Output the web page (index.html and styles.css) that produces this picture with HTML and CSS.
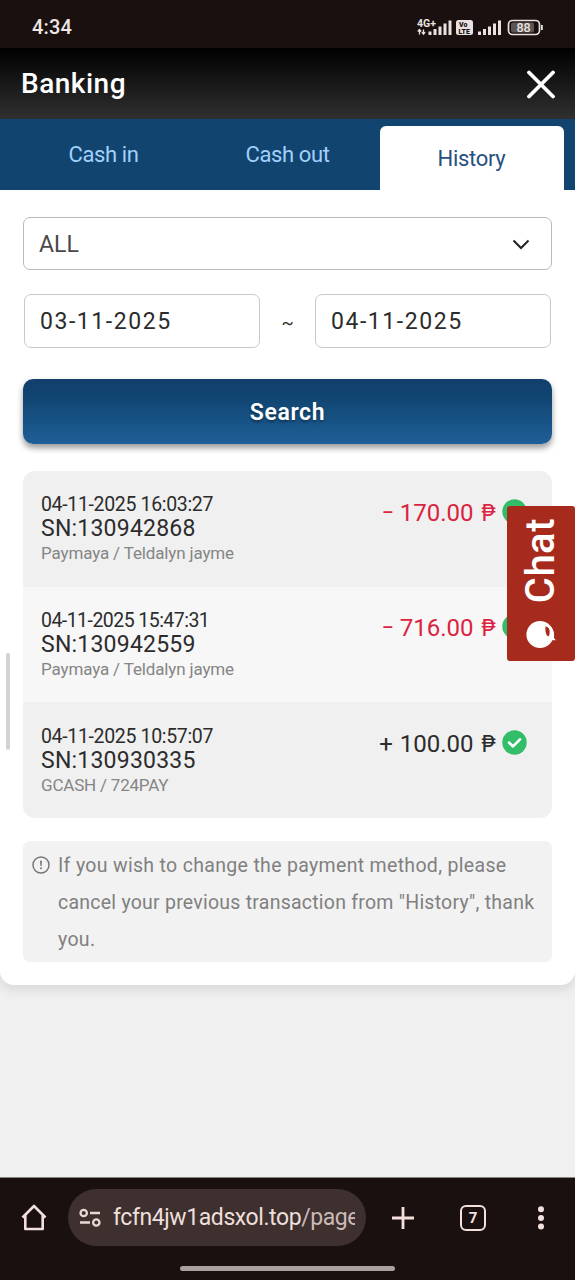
FILE: index.html
```html
<!DOCTYPE html>
<html lang="en">
<head>
<meta charset="utf-8">
<title>Banking</title>
<link rel="stylesheet" href="styles.css">
</head>
<body>
<div class="screen">
  <div class="status">
    <span class="time">4:34</span>
    <svg class="status-icons" width="128" height="20" viewBox="0 0 128 20">
      <g fill="#e9e2e0">
        <text class="net" x="0" y="9.500">4G+</text>
        <path d="M2.500 17.500v-4M.8 14.500l1.700-2 1.700 2M6.500 12.500v4M4.900 15.200l1.600 2 1.600-2" fill="none" stroke="#e9e2e0" stroke-width="1.300"/>
        <path d="M11.500 14.500h3v3.500h-3zM16.500 12h3v6h-3zM21.500 9.500h3v8.500h-3zM26.500 6.500h3V18h-3zM31.500 3.500h3V18h-3z"/>
        <rect x="39" y="3" width="17" height="15" rx="2.500"/>
        <path d="M61 14.500h3V18h-3zM66 12h3v6h-3zM71 9.500h3V18h-3zM76 6.500h3V18h-3zM81 3.500h3V18h-3z"/>
        <rect x="91.500" y="3.500" width="31" height="14" rx="4" fill="none" stroke="#e9e2e0" stroke-width="1.700"/>
        <rect x="94" y="5.500" width="23" height="10" rx="2" fill="#5d5553"/>
        <path d="M124 8h1.800v5H124z"/>
        <text class="pct" x="99.500" y="15">88</text>
      </g>
      <text class="lte" x="42" y="10">Vo</text>
      <text class="lte" x="41.500" y="16.800">LTE</text>
    </svg>
  </div>
  <header class="head">
    <h1 class="title">Banking</h1>
    <svg width="28" height="29" viewBox="0 0 28 29"><path d="M2 2.500 26 26.500M26 2.500 2 26.500" stroke="#fff" stroke-width="3.800" stroke-linecap="round"/></svg>
  </header>
  <nav class="tabs">
    <a class="tab cash-in">Cash in</a>
    <a class="tab cash-out">Cash out</a>
    <a class="tab active">History</a>
  </nav>
  <main class="page">
    <section class="card">
      <div class="select"><span>ALL</span><svg width="18" height="11" viewBox="0 0 18 11"><path d="m1.500 1.500 7.500 7.500 7.500-7.500" fill="none" stroke="#222" stroke-width="2"/></svg></div>
      <div class="dates"><div class="date">03-11-2025</div><span class="tilde">~</span><div class="date">04-11-2025</div></div>
      <button class="search">Search</button>
      <div class="list">
        <div class="row">
          <div class="info"><div class="when">04-11-2025 16:03:27</div><div class="sn">SN:130942868</div><div class="via">Paymaya / Teldalyn jayme</div></div>
          <div class="amount out"><span><span class="minus">–</span>170.00 <span class="peso">₱</span></span><svg class="ok" viewBox="0 0 25 25"><circle cx="12.500" cy="12.500" r="12.200"/><path d="m7 12.600 4 3.800 7-7"/></svg></div>
        </div>
        <div class="row">
          <div class="info"><div class="when when-b">04-11-2025 15:47:31</div><div class="sn">SN:130942559</div><div class="via">Paymaya / Teldalyn jayme</div></div>
          <div class="amount out"><span><span class="minus">–</span>716.00 <span class="peso">₱</span></span><svg class="ok" viewBox="0 0 25 25"><circle cx="12.500" cy="12.500" r="12.200"/><path d="m7 12.600 4 3.800 7-7"/></svg></div>
        </div>
        <div class="row">
          <div class="info"><div class="when">04-11-2025 10:57:07</div><div class="sn">SN:130930335</div><div class="via via-c">GCASH / 724PAY</div></div>
          <div class="amount"><span><span class="sign">+</span>100.00 <span class="peso">₱</span></span><svg class="ok" viewBox="0 0 25 25"><circle cx="12.500" cy="12.500" r="12.200"/><path d="m7 12.600 4 3.800 7-7"/></svg></div>
        </div>
      </div>
      <div class="note">
        <svg class="warn" width="18" height="18" viewBox="0 0 18 18"><circle cx="9" cy="9" r="8" fill="none" stroke="#777" stroke-width="1.500"/><path d="M8 4.700h2l-.4 5.300H8.400z" fill="#777"/><circle cx="9" cy="12.300" r="1" fill="#777"/></svg>
        <p><span class="l1">If you wish to change the payment method, please</span><br><span class="l2">cancel your previous transaction from "History", thank</span><br>you.</p>
      </div>
    </section>
  </main>
  <footer class="browser">
    <div class="bar">
      <svg class="home" width="26" height="27" viewBox="0 0 26 27"><path d="M1.500 13.500 13 2l11.500 11.500M4.300 11.500V25h17.400V11.500" fill="none" stroke="#f3e0dc" stroke-width="2.600" stroke-linejoin="round"/></svg>
      <div class="pill">
        <svg width="22" height="20" viewBox="0 0 22 20" fill="none" stroke="#e9d9d4" stroke-width="2.300"><circle cx="4.700" cy="5" r="3.200"/><circle cx="17.300" cy="14.500" r="3.200"/><path d="M11 5h10M1 14.500h10"/></svg>
        <span class="url">fcfn4jw1adsxol.top<span class="path">/page</span></span>
      </div>
      <svg class="plus" width="24" height="24" viewBox="0 0 24 24"><path d="M12 1v22M1 12h22" stroke="#f3e0dc" stroke-width="2.800"/></svg>
      <div class="count">7</div>
      <svg class="dots" width="8" height="24" viewBox="0 0 8 24" fill="#f3e0dc"><circle cx="4" cy="3.300" r="3"/><circle cx="4" cy="12" r="3"/><circle cx="4" cy="20.500" r="3"/></svg>
    </div>
    <div class="handle"></div>
  </footer>
  <div class="scroll"></div>
  <aside class="chat">
    <span class="chat-text">Chat</span>
    <svg width="30" height="29" viewBox="0 0 30 29"><circle cx="14" cy="14.500" r="13.600" fill="#fff"/><path d="M24 6c4 3.500 4.500 8 4 12l1.800 2.200L24 20z" fill="#fff"/><path d="M19.500 6.500c4 0 5.500 6 3 10-2.500-1-3.500-5-3-10z" fill="#a72b1d"/></svg>
  </aside>
</div>
</body>
</html>
```
FILE: styles.css
```css
* { box-sizing: border-box; }
body { margin: 0; font-family: Roboto, "Noto Sans", sans-serif; background: #f0f0f0; color: #2c2c2c; }
svg { display: block; flex: none; }
.screen { position: relative; width: 575px; height: 1280px; overflow: hidden; display: flex; flex-direction: column; }

.status { height: 48px; flex: none; background: #1a100f; display: flex; justify-content: space-between; align-items: center; padding: 6px 30px 0 32px; }
.time { color: #ede6e4; font-size: 20px; font-weight: 500; letter-spacing: .2px; }
.net { font: 700 10.500px Roboto, sans-serif; }
.pct { font: 500 12.500px Roboto, sans-serif; }
.lte { font: 900 7px Roboto, sans-serif; fill: #1a100f; }

.head { height: 71px; flex: none; display: flex; justify-content: space-between; align-items: center; padding: 1px 20px 0 21px; background: linear-gradient(#000, #303030); }
.title { margin: 0; font-size: 28px; font-weight: 500; line-height: 32px; letter-spacing: .5px; color: #fff; }

.tabs { height: 71px; flex: none; display: grid; grid-template-columns: 184px 184px 184px; padding: 0 11.500px; background: #114570; }
.tab { display: flex; align-items: center; justify-content: center; font-size: 22px; letter-spacing: -.4px; color: #a3d0fb; }
.active { margin-top: 7px; letter-spacing: -.3px; color: #265081; background: #fff; border-radius: 6px 6px 0 0; }

.page { flex: 1; background: #f0f0f0; }
.card { height: 795px; padding: 27px 23px 0; background: #fff; border-radius: 0 0 14px 14px; box-shadow: 0 3px 14px rgba(0,0,0,.13); clip-path: inset(0 0 -24px 0); }
.select { height: 53px; display: flex; align-items: center; justify-content: space-between; padding: 1px 21px 0 15px; border: 1px solid #b9b9b9; border-radius: 7px; font-size: 23px; color: #484848; }
.dates { display: flex; align-items: center; justify-content: space-between; padding: 0 1px; margin-top: 24px; }
.date { width: 236px; height: 54px; padding: 1px 0 0 15px; display: flex; align-items: center; border: 1.500px solid #c9c9c9; border-radius: 7px; font-size: 23px; letter-spacing: 1.550px; }
.tilde { padding-top: 3px; font-size: 18px; }
.search { display: block; width: 100%; height: 65px; margin: 31px 0 0; padding: 2px 0 0; border: 0; border-radius: 10px; background: linear-gradient(#123f6d 0%, #114571 28%, #1e5f98 100%); box-shadow: 0 4px 6px rgba(0,0,0,.4); color: #fff; font: 600 23px Roboto, sans-serif; letter-spacing: .6px; text-shadow: 0 2px 3px rgba(0,0,0,.4); }

.list { margin-top: 27px; border-radius: 12px; overflow: hidden; }
.row { height: 115.700px; padding: 22px 25px 0 18px; display: flex; justify-content: space-between; background: #f0f0f0; }
.row:nth-child(2) { background: #f7f7f7; }
.row:nth-child(3) { padding-top: 22.200px; }
.when { font-size: 19.500px; line-height: 23px; letter-spacing: -.340px; }
.when-b { letter-spacing: -.540px; }
.sn { font-size: 23px; line-height: 25px; letter-spacing: .220px; }
.via { font-size: 17px; line-height: 25.500px; letter-spacing: -.140px; color: #858585; }
.via-c { letter-spacing: -.200px; }
.amount { display: flex; align-items: center; gap: 6px; height: 39.500px; font-size: 24px; white-space: nowrap; }
.minus { display: inline-block; margin-right: 6px; transform: scaleX(.75); transform-origin: right; }
.sign { display: inline-block; margin-right: 7px; }
.peso { margin-left: 1.500px; font: 22.500px Inter, sans-serif; }
.out { color: #dc2340; }
.ok { width: 25px; height: 25px; margin-top: -3px; }
.ok circle { fill: #32bd69; }
.ok path { fill: none; stroke: #fff; stroke-width: 2.700; stroke-linecap: round; stroke-linejoin: round; }

.note { display: flex; height: 121px; margin-top: 22.900px; padding: 6px 0 0 9px; gap: 8px; border-radius: 7px; background: #f2f2f2; color: #808080; }
.warn { margin-top: 9px; }
.note p { margin: 0; font-size: 19.500px; line-height: 37px; letter-spacing: .320px; white-space: nowrap; }
.l2 { letter-spacing: .240px; }

.browser { height: 103px; flex: none; background: #1a100f; border-top: 1px solid #8d8580; }
.bar { display: flex; align-items: center; height: 57px; margin-top: 11px; padding: 0 30px 0 21px; }
.pill { width: 298px; height: 57px; margin-left: 21px; padding: 0 11px; display: flex; align-items: center; gap: 12px; border-radius: 29px; background: #3d302e; color: #eedfdb; }
.url { width: 242px; overflow: hidden; white-space: nowrap; font-size: 23px; line-height: 30px; letter-spacing: -.420px; }
.path { color: #cbbab6; }
.plus { margin-left: 25px; }
.count { width: 26px; height: 26px; margin-left: 45px; display: flex; align-items: center; justify-content: center; border: 2.500px solid #f3e0dc; border-radius: 6px; color: #f3e0dc; font-size: 15px; font-weight: 700; }
.dots { margin-left: 51px; }
.handle { width: 215px; height: 5px; margin: 20px auto 0; border-radius: 3px; background: #aaa29f; }

.scroll { position: absolute; left: 6px; top: 653px; width: 4px; height: 97px; border-radius: 2px; background: #d3d3d3; }
.chat { position: absolute; right: 0; top: 506px; width: 68px; height: 155px; padding: 12px 0 12px; display: flex; flex-direction: column; align-items: center; justify-content: space-between; border-radius: 3px; background: #a72b1d; color: #fff; }
.chat-text { writing-mode: vertical-rl; transform: rotate(180deg); font-size: 40px; font-weight: 500; line-height: 46px; letter-spacing: .500px; }
```
